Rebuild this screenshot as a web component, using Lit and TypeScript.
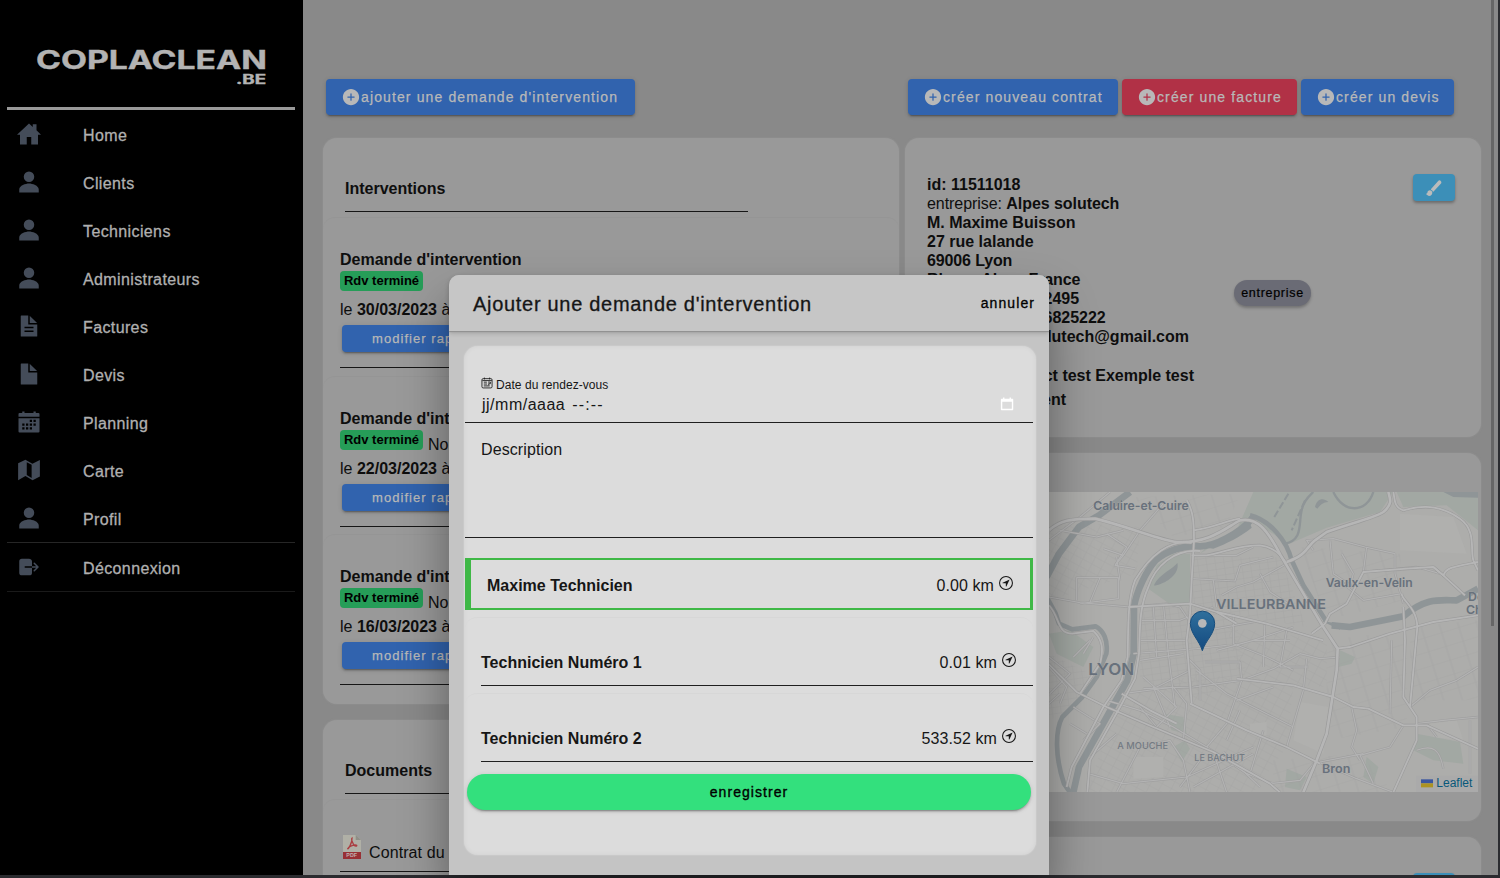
import { LitElement, html, svg, css } from "lit";
import { customElement } from "lit/decorators.js";

const ICONS: Record<string, any> = {
  home: svg`<path d="M416 174.74V48h-80v58.45L256 32 0 272h64v208h144V320h96v160h144V272h64z"/>`,
  person: svg`<path d="M256 256a112 112 0 10-112-112 112 112 0 00112 112zm0 32c-69.42 0-208 42.88-208 128v64h416v-64c0-85.12-138.58-128-208-128z"/>`,
  docText: svg`<path d="M272 41.69V188a4 4 0 004 4h146.31a2 2 0 001.42-3.41L275.41 40.28A2 2 0 00272 41.69z"/><path d="M248 224a8 8 0 01-8-8V32H92a12 12 0 00-12 12v424a12 12 0 0012 12h328a12 12 0 0012-12V224zm104 160H160v-32h192zm0-80H160v-32h192z"/>`,
  doc: svg`<path d="M272 41.69V188a4 4 0 004 4h146.31a2 2 0 001.42-3.41L275.41 40.28A2 2 0 00272 41.69z"/><path d="M248 224a8 8 0 01-8-8V32H92a12 12 0 00-12 12v424a12 12 0 0012 12h328a12 12 0 0012-12V224z"/>`,
  calendar: svg`<path d="M456 64h-55.92V32h-48v32H159.92V32h-48v32H56a23.8 23.8 0 00-24 23.77V144h448V87.77A23.8 23.8 0 00456 64z"/><path fill-rule="evenodd" d="M32 176v280a24 24 0 0024 24h400a24 24 0 0024-24V176zM272 208h48v48h-48zM352 208h48v48h-48zM112 288h48v48h-48zM192 288h48v48h-48zM272 288h48v48h-48zM352 288h48v48h-48zM112 368h48v48h-48zM192 368h48v48h-48zM272 368h48v48h-48z"/>`,
  map: svg`<path fill-rule="evenodd" d="M24 112L180 38 328 120 488 40V396L332 476 180 384 24 476zM208 92V364L312 424V146z"/>`,
  logout: svg`<path d="M160 256a16 16 0 0116-16h144V136c0-32-33.79-56-64-56H104a56.06 56.06 0 00-56 56v240a56.06 56.06 0 0056 56h160a56.06 56.06 0 0056-56V272H176a16 16 0 01-16-16zM459.31 244.69l-80-80a16 16 0 00-22.62 22.62L409.37 240H320v32h89.37l-52.68 52.69a16 16 0 1022.62 22.62l80-80a16 16 0 000-22.62z"/>`,
  add: svg`<path fill-rule="evenodd" d="M256 48C141.31 48 48 141.31 48 256s93.31 208 208 208 208-93.31 208-208S370.69 48 256 48zm80 224h-64v64a16 16 0 01-32 0v-64h-64a16 16 0 010-32h64v-64a16 16 0 0132 0v64h64a16 16 0 010 32z"/>`,
  brush: svg`<path d="M233.15 360.11a15.7 15.7 0 01-4.92-.77 16 16 0 01-10.92-13c-2.15-15-19.95-32.46-36.62-35.85A16 16 0 01172 284.16L369.2 61.2a56.3 56.3 0 0180.6-2.9c22.1 22.3 21.9 57.400-.8 79.2L244.200 355.600a16 16 0 01-11.050 4.510zM119.890 480.110c-32.140 0-65.450-16.890-84.850-43a16 16 0 0112.850-25.540c5.340 0 20-4.870 20-20.570 0-39.070 31.400-70.860 70-70.860s70 31.790 70 70.860c0 49.120-39.480 89.110-88 89.110z"/>`,
  locate: svg`<circle cx="256" cy="256" r="206" fill="none" stroke="currentColor" stroke-width="34"/><path d="M356 148L146 244c-9 5-6 18 4 18h92a8 8 0 018 8v92c0 10 13 13 18 4l96-210c3-6-2-11-8-8z"/>`,
  dateField: svg`<g fill="none" stroke="currentColor" stroke-width="36"><rect x="40" y="70" width="432" height="396" rx="52"/><path d="M144 24v80M368 24v80M60 152h400M120 220h130M300 216h100v70h-90M120 300h140M120 380h250M300 330h60"/></g>`,
  picker: svg`<path fill-rule="evenodd" d="M112 16h50v48h188V16h50v48h60a24 24 0 0124 24v368a24 24 0 01-24 24H56a24 24 0 01-24-24V88a24 24 0 0124-24h56zM84 176v252h348V176z"/>`,
};

const icon = (name: string, cls: string) =>
  html`<svg class=${cls} viewBox="0 0 512 512" fill="currentColor" aria-hidden="true">${ICONS[name]}</svg>`;

const shared = css`
  :host { display: block; font-family: "Liberation Sans", Arial, sans-serif; font-size: 16px; line-height: 19px; }
  * { box-sizing: border-box; }
  b { font-weight: 700; }
`;

@customElement("side-menu")
class SideMenu extends LitElement {
  static styles = [shared, css`
    :host { background: #000; padding: 44px 8px 0 7px; height: 875px; color: #b0b0b0; }
    .logo { display: block; width: 288px; height: 63px; border-bottom: 3px solid #999; box-sizing: content-box; }
    .logo text { font-family: Inter, sans-serif; font-weight: 700; fill: #b3b3b3; stroke: #b3b3b3; stroke-width: .4; }
    .item { height: 48px; display: flex; align-items: center; padding: 2px 0 0 10px; }
    .last { border-top: 1px solid #262626; border-bottom: 1px solid #1a1a1a; height: 50px; }
    .ico { width: 24px; height: 24px; color: #444c59; margin-top: -2px; }
    .label { margin-left: 42px; letter-spacing: .38px; -webkit-text-stroke: .3px #b0b0b0; }
  `];
  items = [["home", "Home"], ["person", "Clients"], ["person", "Techniciens"], ["person", "Administrateurs"],
    ["docText", "Factures"], ["doc", "Devis"], ["calendar", "Planning"], ["map", "Carte"], ["person", "Profil"]];
  render() {
    return html`
      <svg class="logo" viewBox="7 44 288 63">
        <text x="36" y="69.300" font-size="25" font-weight="700" textLength="231" lengthAdjust="spacingAndGlyphs">COPLACLEAN</text>
        <text x="236" y="84" font-size="13" textLength="30" lengthAdjust="spacingAndGlyphs">.BE</text>
      </svg>
      ${this.items.map(([i, t]) => html`<div class="item">${icon(i, "ico")}<span class="label">${t}</span></div>`)}
      <div class="item last">${icon("logout", "ico")}<span class="label">Déconnexion</span></div>`;
  }
}

@customElement("client-map")
class ClientMap extends LitElement {
  static styles = css`
    :host { display: block; height: 300px; }
    svg { display: block; width: 100%; height: 100%; }
    .water { fill: none; stroke: #8f9597; stroke-linejoin: round; }
    .lake { fill: #8f9597; }
    .green { fill: #a2a8a3; }
    .pale { fill: #b0b0ae; }
    .casing { fill: none; stroke: #9b9b9b; stroke-width: 9; stroke-linejoin: round; }
    .casing.thin { stroke: #9e9e9e; stroke-width: 7; }
    .casing.big { stroke-width: 12; }
    .road { fill: none; stroke: #b6b6b6; stroke-width: 5.5; stroke-linejoin: round; }
    .road.thin { stroke: #b3b3b3; stroke-width: 3.5; }
    .road.big { stroke-width: 8; }
    .lane { fill: none; stroke: #9f9f9e; stroke-width: 1.8; }
    .place { font-family: Inter, "Open Sans", sans-serif; font-weight: 600; fill: #68717c; stroke: #adadab; stroke-width: 2; paint-order: stroke; }
    .small { font-weight: 500; fill: #737a83; }
    .leaflet { font-family: "Liberation Sans", Arial, sans-serif; fill: #08587a; }
  `;
  render() {
    const minor = [
      "M27 300L120 230 210 155M60 270L170 290 250 270M110 480V412H235V475L120 490M190 325L250 345 225 375 285 385M150 485L180 412M27 470L120 487 270 500M240 420L230 350",
      "M250 345L300 270 370 190M225 375L260 320 200 280M460 345L590 345 640 320M455 415L585 422 600 375 700 350M520 420L530 500M545 465L590 440 640 425 740 370M660 400L690 455 760 500M820 330L800 300 880 295 975 320 1065 340",
      "M870 300L880 400 925 430M905 340L940 400 930 440M980 320L970 395M1065 340V400L1090 490M970 395L1130 380 1200 400M910 430L970 480 1085 460",
      "M300 540L420 540 520 500M370 490L385 640 405 800M340 500L350 650M300 600H440M280 640L470 625 560 615M300 660L430 640M270 500L380 490 420 500 460 560",
      "M580 520V610L680 650 760 690M675 540L670 680M740 570L720 680H805M495 665H600L605 720M605 720L460 740 310 745M605 720L700 685 780 640 840 655 900 650M530 630L640 600H750M500 570L640 545M440 650L480 690V780",
      "M310 710L410 800M350 740L450 690M470 690L560 760 700 830 760 860M200 780L300 810 400 860 500 920M340 740L390 860M250 760L400 740M410 800L350 860 300 800M605 720L560 850 500 920M800 655L790 750 740 920M670 870L630 1000",
      "M500 920L620 1000 700 1030M400 740L440 790 430 900M145 1000L250 1030 440 1010 640 920M150 950L230 880M100 800L180 850 130 900M90 850L140 880M230 1056L300 920 390 900 430 960 450 1056M420 1040L480 960M690 1030L780 1020 830 960",
      "M935 800L950 870 935 920 960 960M1050 820L1055 600M960 945L1050 920 1090 855M1130 850L1210 840 1314 830M1110 800L1170 750 1250 720 1314 680M1160 850L1190 890M1130 930C1180 910 1200 930 1210 985M1290 1000V840",
      "M835 965L950 1015 1060 1056M960 945L1000 1030M840 965L970 940M27 650L90 700 30 760M60 760L27 790M130 640L160 590M27 680L80 740 60 790",
      "M100 650L150 600M520 935L560 1056M550 935L660 1040M460 1040L640 940M590 780L700 740M640 600L760 560M600 810L560 900",
    ];
    const major = [
      "M27 270C60 240 90 235 165 235 270 260 360 300 410 305 510 310 560 260 600 240 650 230 680 265 722 345L850 560 893 625 890 690 860 880 830 960 790 1056",
      "M440 180C460 210 462 250 462 300L455 420 450 520 440 600 455 790",
      "M455 345H500C570 330 600 315 660 315 700 320 720 340 740 370",
      "M462 270C530 260 560 240 600 235",
      "M740 365C800 345 800 320 825 300L860 275C960 240 1010 230 1030 215 1060 190 1050 175 1045 155",
      "M1060 155C1065 175 1060 200 1090 210 1160 190 1210 200 1260 235 1310 270 1290 330 1300 360L1314 390",
      "M1314 365C1240 380 1220 380 1210 405L1180 380 1100 385 970 395 920 490 870 520 855 550 815 580",
      "M1180 380L1210 405 1275 465",
      "M480 332C400 325 345 380 325 440 298 500 300 560 297 640L285 715 240 800 150 960 142 1056",
      "M455 308C390 296 330 345 285 420 262 480 265 560 263 650L245 720 190 800 95 980 80 1040",
      "M1090 500L1095 600 1090 770 1130 830V900L1060 1056M1085 460C1085 480 1130 500 1132 560L1110 800",
      "M590 715L760 735 880 770 940 800 985 805 1090 855H1160L1314 925",
      "M530 515L680 550 850 600M890 625L930 620 1050 580 1180 545 1314 525",
      "M27 672L110 755 200 800 340 860 520 935 690 1030 720 1056",
      "M245 760L330 810 410 850M450 790L620 870 740 920 840 970",
      "M265 500L450 490 530 515 590 550",
      "M27 495C60 530 50 580 97 580L160 572C190 600 190 630 180 670L120 760",
    ];
    return html`
      <svg viewBox="-396 155 1710 900" preserveAspectRatio="none">
        <defs>
          <pattern id="gridA" width="26" height="19" patternUnits="userSpaceOnUse" patternTransform="rotate(-8)"><path class="lane" d="M0 0H26M0 0V19"/></pattern>
          <pattern id="gridB" width="31" height="23" patternUnits="userSpaceOnUse" patternTransform="rotate(28)"><path class="lane" d="M0 0H31M0 0V23"/></pattern>
          <pattern id="gridC" width="54" height="43" patternUnits="userSpaceOnUse" patternTransform="rotate(-17)"><path class="lane" d="M0 0H54M12 0V43"/></pattern>
          <linearGradient id="pin" x1="0" y1="0" x2="0" y2="1"><stop offset="0" stop-color="#2f6f9c"/><stop offset="1" stop-color="#134a80"/></linearGradient>
        </defs>
        <rect x="-396" y="155" width="1710" height="900" fill="#adadab"/>
        <path class="green" d="M640 155H1060L1020 215 860 262 745 312 640 240 480 340 500 320 590 270zM325 445L350 375 400 340H450V496L385 488zM1070 155H1314V270L1220 195 1090 200zM400 920L435 900 450 925 425 965zM900 630L945 650 935 670 895 680zM1130 880L1260 905 1270 970 1180 960 1120 930zM370 820L430 830 440 880 395 870zM980 950L1015 980 1000 1030 970 1010zM27 580L90 570 160 620 130 680 50 640zM740 985L800 1010 780 1050 735 1040z"/>
        <g opacity=".65">
          <path fill="url(#gridA)" d="M300 500H580L620 700 480 780 300 720zM27 640L150 700 120 800 27 840zM460 350L720 350 800 560 460 500z"/>
          <path fill="url(#gridB)" d="M240 760L480 700 760 740 740 920 640 1056H140zM27 260L140 250 300 260 290 400 27 480zM560 560L860 600 860 740 600 720z"/>
          <path fill="url(#gridC)" d="M780 320L1080 340 1090 480 860 540zM860 600L1100 570 1100 860 860 900zM700 960L960 940 1060 1056H700zM1110 560L1314 540V780H1110zM280 170L600 160 560 260 400 290z"/>
        </g>
        <path class="pale" d="M780 785L865 800 850 940 760 900zM1080 220L1240 230 1280 340 1080 330zM630 850L680 845 680 885 630 880zM280 950L370 950 370 1010 280 1015zM1170 850L1250 840 1270 900 1180 890z"/>
        <path class="water" stroke-width="20" d="M270 155L177 225 117 260 57 340 20 410"/>
        <path class="water" stroke-width="20" d="M640 230C600 280 520 320 477 318 430 315 380 330 347 360 320 390 290 450 282 500L281 640 262 720 217 800 117 980 100 1056"/>
        <path class="water" stroke-width="14" d="M20 470L47 520 57 550 97 567 167 558C190 570 205 600 199 640L170 710 127 770 67 830C45 870 45 950 72 1030L90 1056"/>
        <path class="water" stroke-width="14" d="M630 225C690 240 740 300 755 360L790 435 860 545"/>
        <path class="water" stroke-width="20" d="M875 555L930 560 1090 528C1160 470 1200 480 1250 480L1314 445"/>
        <path class="lake" d="M845 542L900 550 900 568z"/>
        <path class="water" stroke-width="7" d="M735 310C790 300 775 250 785 210 790 180 810 165 820 155M880 155C910 220 980 220 1000 155"/>
        <path class="water" stroke-width="6" stroke-dasharray="22 8" d="M745 160L700 235M795 180L755 270"/>
        <path class="lake" d="M343 432C360 400 400 385 412 368 420 400 380 430 343 436zM825 200C830 175 850 170 865 185 850 185 840 195 832 205zM1210 155H1314V172L1240 170zM500 322C540 290 600 270 625 235L635 262C600 290 560 310 520 325z"/>
        ${minor.map((d) => svg`<path class="casing thin" d=${d}/>`)}
        ${minor.map((d) => svg`<path class="road thin" d=${d}/>`)}
        ${major.map((d, i) => svg`<path class=${i === 0 || i === 4 ? "casing big" : "casing"} d=${d}/>`)}
        ${major.map((d, i) => svg`<path class=${i === 0 || i === 4 ? "road big" : "road"} d=${d}/>`)}
        <g class="place">
          <text x="160" y="208" font-size="36" textLength="286" lengthAdjust="spacingAndGlyphs">Caluire-et-Cuire</text>
          <text x="857" y="440" font-size="36" textLength="261" lengthAdjust="spacingAndGlyphs">Vaulx-en-Velin</text>
          <text x="528" y="505" font-size="41" textLength="330" lengthAdjust="spacingAndGlyphs">VILLEURBANNE</text>
          <text x="145" y="705" font-size="48" textLength="137" lengthAdjust="spacingAndGlyphs">LYON</text>
          <text x="1284" y="482" font-size="37">Dé</text>
          <text x="1278" y="520" font-size="37">Ch</text>
          <text x="846" y="998" font-size="36" textLength="85" lengthAdjust="spacingAndGlyphs">Bron</text>
          <text class="small" x="232" y="926" font-size="27" textLength="152" lengthAdjust="spacingAndGlyphs">A MOUCHE</text>
          <text class="small" x="463" y="963" font-size="27" textLength="152" lengthAdjust="spacingAndGlyphs">LE BACHUT</text>
        </g>
        <path fill="url(#pin)" stroke="#174d7c" stroke-width="3" d="M487 631C478 600 451 580 451 549a36.500 36.500 0 0173 0C524 580 497 600 487 631z"/>
        <circle cx="487" cy="549" r="13" fill="#b8b8b8"/>
        <rect x="1128" y="1006" width="186" height="50" fill="#a9a9a9" opacity=".85"/>
        <rect x="1143" y="1017" width="36" height="12" fill="#3a56a0"/><rect x="1143" y="1029" width="36" height="12" fill="#ac9323"/>
        <text class="leaflet" x="1189" y="1041" font-size="36" textLength="108">Leaflet</text>
      </svg>`;
  }
}

@customElement("request-modal")
class RequestModal extends LitElement {
  static styles = [shared, css`
    :host { width: 600px; height: 600px; background: #c4c4c4; color: #161616; border-radius: 10px 10px 0 0; box-shadow: 0 28px 48px rgba(0,0,0,.4); }
    .head { height: 56px; display: flex; align-items: center; justify-content: space-between; padding: 1px 14px 0 24px; background: #c6c6c6; border-radius: 10px 10px 0 0; box-shadow: 0 1px 1px #8f8f8f, 0 2px 5px rgba(0,0,0,.2); }
    .title { font-size: 20px; line-height: 24px; letter-spacing: .7px; -webkit-text-stroke: .3px #161616; }
    .cancel { font-size: 14px; letter-spacing: 1.08px; color: #000; -webkit-text-stroke: .3px #000; }
    .card { margin: 15px 13px 0 15px; height: 509px; border-radius: 14px; background: #dcdcdc; padding: 30px 3px 0 1px; box-shadow: 0 0 2px rgba(255,255,255,.35), inset 0 0 5px rgba(0,0,0,.05); }
    .date { height: 47px; padding: 0 19px 0 16px; border-bottom: 1px solid #1f1f1f; }
    .lab { display: flex; gap: 3px; font-size: 12px; line-height: 16px; letter-spacing: .05px; }
    .lab svg { width: 12px; height: 12px; margin-top: 1px; }
    .lab span { padding-top: 1px; }
    .val { display: flex; justify-content: space-between; padding: 1px 0 0 1px; line-height: 22px; letter-spacing: .5px; }
    .time { margin-left: 2px; letter-spacing: 1.15px; }
    .val svg { width: 14px; height: 14px; color: #fff; margin-top: 3px; }
    .desc { height: 115px; padding: 17px 16px 0; border-bottom: 1px solid #1f1f1f; letter-spacing: .1px; }
    .tech { display: flex; justify-content: space-between; align-items: center; margin-left: 16px; padding-right: 17px; height: 47px; border-bottom: 1px solid #1f1f1f; }
    .tech.sel { margin: 20px 0 0; height: 52px; padding: 2px 17px 0 16px; border: 2px solid #3fb846; border-left-width: 6px; border-right-width: 3px; }
    .seam { height: 22px; margin-top: 7px; border-top: 1px solid #d7d7d7; border-radius: 12px 12px 0 0; }
    .km { display: flex; gap: 4px; letter-spacing: .08px; }
    .km svg { width: 16px; height: 16px; margin: -1px -1px 0 0; }
    .save { height: 36px; margin: 12px 2px 0; border-radius: 18px; background: #33e07d; display: grid; place-items: center; font-size: 14px; letter-spacing: 1.05px; color: #000; -webkit-text-stroke: .35px #000; box-shadow: 0 3px 1px -2px rgba(0,0,0,.2), 0 2px 2px rgba(0,0,0,.14), 0 1px 5px rgba(0,0,0,.12); }
  `];
  render() {
    const km = (v: string) => html`<span class="km">${v}${icon("locate", "")}</span>`;
    return html`
      <div class="head"><span class="title">Ajouter une demande d'intervention</span><span class="cancel">annuler</span></div>
      <div class="card">
        <div class="date">
          <div class="lab">${icon("dateField", "")}<span>Date du rendez-vous</span></div>
          <div class="val"><span>jj/mm/aaaa <span class="time">--:--</span></span>${icon("picker", "")}</div>
        </div>
        <div class="desc">Description</div>
        <div class="tech sel"><b>Maxime Technicien</b>${km("0.00 km")}</div>
        <div class="seam"></div>
        <div class="tech"><b>Technicien Numéro 1</b>${km("0.01 km")}</div>
        <div class="seam"></div>
        <div class="tech"><b>Technicien Numéro 2</b>${km("533.52 km")}</div>
        <div class="save">enregistrer</div>
      </div>`;
  }
}

@customElement("app-root")
class AppRoot extends LitElement {
  static styles = [shared, css`
    :host { position: relative; height: 878px; overflow: hidden; background: #2b2c30; color: #0e0e0e; }
    .page { display: grid; grid-template-columns: 303px 1195px; height: 875px; }
    .main { height: 875px; overflow: hidden; background: #898989; display: grid; grid-template-columns: 1168px 1fr; }
    .content { padding: 79px 0 0 20px; }
    .bar { display: flex; gap: 4px; padding-left: 3px; height: 37px; }
    .bar .first { margin-right: auto; }
    .bar .end { margin-right: 17px; }
    .btn { height: 36px; border-radius: 4px; display: flex; align-items: center; font-size: 14px; letter-spacing: 1.12px; color: #b8b8b8; -webkit-text-stroke: .25px #b8b8b8; background: #3163ae; padding-left: 15px; white-space: nowrap; box-shadow: 0 3px 1px -2px rgba(0,0,0,.2), 0 2px 2px rgba(0,0,0,.14), 0 1px 5px rgba(0,0,0,.12); }
    .btn svg { width: 20px; height: 20px; }
    .red { background: #b13146; }
    .cols { display: grid; grid-template-columns: 576px 576px; gap: 6px; margin-top: 22px; width: 1158px; }
    .col { display: flex; flex-direction: column; gap: 16px; }
    .card { background: #999; border-radius: 14px; box-shadow: 0 0 2px rgba(160,160,160,.6); }
    .inter { height: 566px; padding: 41px 0 0; }
    .docs { height: 200px; padding-top: 41px; }
    .h { margin: 0 151px 0 22px; padding-bottom: 13px; border-bottom: 1px solid #161616; height: 33px; font-weight: 700; }
    .row { height: 158px; padding: 32px 17px 0; border-top: 1px solid #959595; border-radius: 12px 12px 0 0; }
    .row.top { height: 159px; margin-top: 5px; }
    .state { display: flex; gap: 5px; height: 20px; margin-top: 2px; }
    .tag { width: 83px; height: 20px; border-radius: 4px; background: #269d58; color: #000; font-size: 13px; font-weight: 700; text-align: center; white-space: nowrap; line-height: 20px; }
    .note { padding-top: 5px; }
    .when { margin-top: 9px; height: 19px; }
    .edit { margin: 6px 0 15px 2px; width: 170px; height: 27px; font-size: 13px; padding-left: 30px; letter-spacing: 1.05px; }
    .rule { height: 1px; background: #161616; margin-right: -17px; }
    .pdf { display: flex; gap: 8px; align-items: flex-end; height: 72px; margin: 5px 0 0; padding: 0 0 9px 20px; border-top: 1px solid #959595; border-radius: 12px 12px 0 0; }
    .pdf svg { width: 18px; height: 24px; margin-bottom: 3px; }
    .pdf span { height: 19px; letter-spacing: .1px; }
    .line { margin-left: 17px; height: 1px; background: #161616; }
    .info { height: 299px; padding: 37px 26px 0 22px; display: grid; grid-template-columns: 307px 1fr auto; }
    .tight { letter-spacing: -.13px; }
    .snug { letter-spacing: -.06px; }
    .fit { text-align: right; white-space: nowrap; }
    .gap { margin-top: 20px; } .gap2 { margin-top: 5px; }
    .chip { margin-top: 105px; width: 77px; height: 26px; border-radius: 13px; background: #6a6b75; color: #000; font-size: 12.500px; letter-spacing: .7px; line-height: 26px; text-align: center; -webkit-text-stroke: .2px #000; box-shadow: 0 2px 3px rgba(0,0,0,.25); }
    .pen { width: 42px; height: 27px; margin-top: -1px; border-radius: 4px; background: #3c8fb8; color: #bbb; display: grid; place-items: center; box-shadow: 0 2px 3px rgba(0,0,0,.3); }
    .pen svg { width: 18px; height: 18px; }
    .mapcard { height: 368px; padding: 39px 3px 0; }
    .lastcard { height: 120px; padding: 36px 26px 0; display: flex; justify-content: flex-end; }
    .lastcard .pen { margin: 0; }
    .thumb { width: 3px; height: 626px; background: #666; margin-left: 20px; }
    request-modal { position: absolute; left: 449px; top: 275px; }
    .foot { height: 3px; background: #2b2b2f; }
  `];
  rows = [
    { note: "", date: "30/03/2023" },
    { note: "Nom", date: "22/03/2023" },
    { note: "Nom", date: "16/03/2023" },
  ];
  lines: [string, number, string][] = [
    ["Téléphone: 0712495", 151, ""], ["Téléphone: 0676825222", 178, ""],
    ["E-mail: alpessolutech@gmail.com", 262, ""], ["Nom du contact test Exemple test", 267, "gap"],
    ["Établissement", 139, "gap2"],
  ];
  render() {
    const btn = (t: string, w: number, c = "") =>
      html`<div class="btn ${c}" style="width:${w}px">${icon("add", "")}${t}</div>`;
    return html`
      <div class="page">
        <side-menu></side-menu>
        <div class="main">
          <div class="content">
            <div class="bar">
              ${btn("ajouter une demande d'intervention", 309, "first")}
              ${btn("créer nouveau contrat", 210)}${btn("créer une facture", 175, "red")}${btn("créer un devis", 153, "end")}
            </div>
            <div class="cols">
              <div class="col">
                <div class="card inter">
                  <div class="h">Interventions</div>
                  ${this.rows.map((r, i) => html`
                    <div class="row ${i === 0 ? "top" : ""}">
                      <b>Demande d'intervention</b>
                      <div class="state"><span class="tag">Rdv terminé</span><span class="note">${r.note}</span></div>
                      <div class="when">le <b>${r.date}</b> à</div>
                      <div class="btn edit">modifier rapport</div>
                      <div class="rule"></div>
                    </div>`)}
                </div>
                <div class="card docs">
                  <div class="h">Documents</div>
                  <div class="pdf">
                    <svg viewBox="0 0 54 72"><path fill="#b0b0a6" d="M0 0H38L54 15V52H0z"/><path fill="#8f8f87" d="M38 0L54 15H38z"/><path fill="#983035" d="M0 51H54V72H0z"/><path fill="none" stroke="#ab3f42" stroke-width="4" d="M27 10C23 14 30 24 32 29 35 35 43 34 41 31 37 27 17 34 14 41 16 44 28 22 27 10z"/><text x="10" y="67" font-family="Liberation Sans" font-weight="700" font-size="16" fill="#c0b0b0">PDF</text></svg>
                    <span>Contrat du</span>
                  </div>
                  <div class="line"></div>
                </div>
              </div>
              <div class="col">
                <div class="card info">
                  <div>
                    <div><b>id: 11511018</b></div>
                    <div class="snug">entreprise: <b>Alpes solutech</b></div>
                    <div><b>M. Maxime Buisson</b></div>
                    <div><b>27 rue lalande</b></div>
                    <div class="tight"><b>69006 Lyon</b></div>
                    <div class="tight"><b>Rhone-Alpes France</b></div>
                    ${this.lines.map(([t, w, c]) => html`<div class="fit ${c}" style="width:${w}px"><b>${t}</b></div>`)}
                  </div>
                  <div class="chip">entreprise</div>
                  <div class="pen">${icon("brush", "")}</div>
                </div>
                <div class="card mapcard"><client-map></client-map></div>
                <div class="card lastcard"><div class="pen"></div></div>
              </div>
            </div>
          </div>
          <div class="thumb"></div>
        </div>
      </div>
      <request-modal></request-modal>
      <div class="foot"></div>`;
  }
}
